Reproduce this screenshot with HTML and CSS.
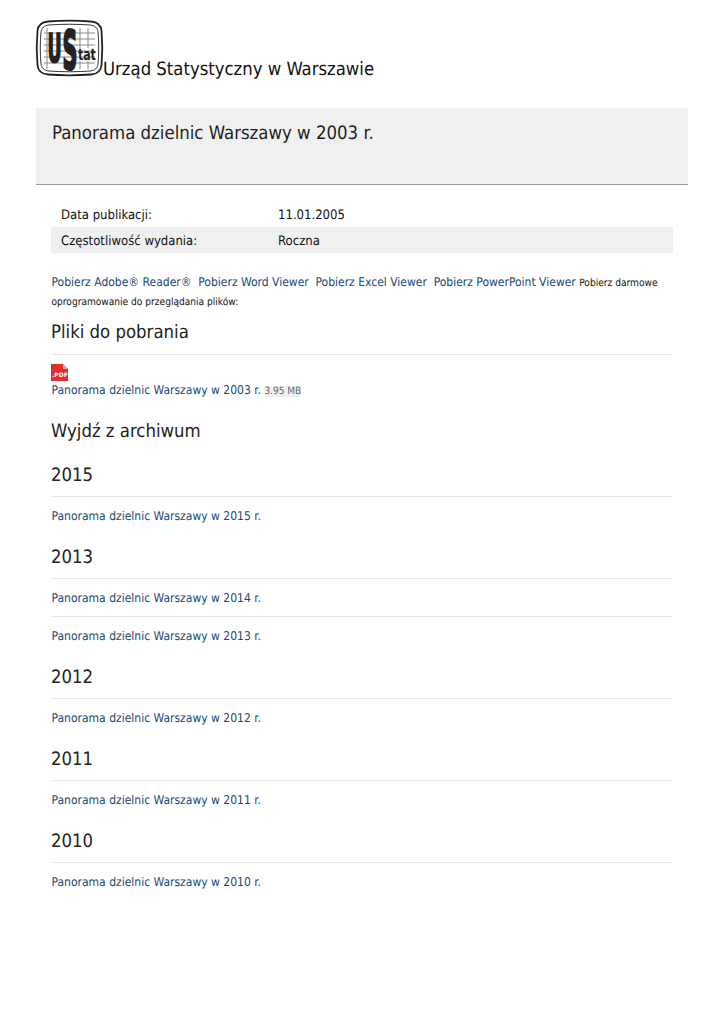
FILE: index.html
```html
<!DOCTYPE html>
<html lang="pl">
  <head>
    <meta charset="UTF-8" />
    <meta name="viewport" content="width=device-width, initial-scale=1.0" />
    <title>Panorama dzielnic Warszawy w 2003 r.</title>
    <link rel="stylesheet" href="styles.css">
  </head>

  <body>
    <header class="siteHeader">
      <svg class="logo" width="67" height="56" viewBox="0 0 67 56">
        <path d="M12 1.500C25 .5 42 .5 55 1.500 62 2 65 5 65.500 11 66.500 22 66.500 34 65.500 45 65 51 62 54 55 54.500 42 55.500 25 55.500 12 54.500 5 54 2 51 1.500 45 .5 34 .5 22 1.500 11 2 5 5 2 12 1.500Z" fill="#fff" stroke="#222" stroke-width="1.800" />
        <path d="M13 5C25 4 42 4 54 5 59 5.500 61.500 8 62 12 63 22 63 34 62 44 61.500 48 59 50.500 54 51 42 52 25 52 13 51 8 50.500 5.500 48 5 44 4 34 4 22 5 12 5.500 8 8 5.500 13 5Z" fill="#fff" stroke="#333" stroke-width="1" />
        <g stroke="#888" stroke-width="1" fill="none">
          <path d="M8 13H59M8 19H59M8 25H59M8 31H59M8 37H59M8 43H59" />
          <path d="M11 8V49M44 8V28M52 8V28M44 41V49M52 41V49" />
        </g>
        <text class="logoU" transform="translate(11.500 42) scale(.58 1.320)">U</text>
        <text class="logoS" transform="translate(26.500 49) scale(.69 1.780)">S</text>
        <text class="logoTat" transform="translate(42 40) scale(.73 1.080)">tat</text>
      </svg>
      <span class="siteName">Urząd Statystyczny w Warszawie</span>
    </header>

    <div class="titleBand">
      <h1 class="pageTitle">Panorama dzielnic Warszawy w 2003 r.</h1>
    </div>

    <main class="content">
      <div class="metaRow">
        <span class="metaLabel">Data publikacji:</span>
        <span>11.01.2005</span>
      </div>
      <div class="metaRow metaRowAlt">
        <span class="metaLabel">Częstotliwość wydania:</span>
        <span>Roczna</span>
      </div>

      <p class="viewers">
        <a href="#">Pobierz Adobe® Reader®</a>
        <a href="#">Pobierz Word Viewer</a>
        <a href="#">Pobierz Excel Viewer</a>
        <a href="#">Pobierz PowerPoint Viewer</a>
        <small>Pobierz darmowe</small>
        <small>oprogramowanie do przeglądania plików:</small>
      </p>

      <h2 class="sectionTitle">Pliki do pobrania</h2>
      <div class="fileRow">
        <svg class="pdfIcon" width="17" height="17" viewBox="0 0 17 17">
          <path d="M0 0H12L17 5V17H0z" fill="#e02f2f" />
          <path d="M12 0L17 5H12z" fill="#f29a9a" />
          <text x="1" y="12.500" class="pdfLabel">.PDF</text>
        </svg>
        <div>
          <a href="#">Panorama dzielnic Warszawy w 2003 r.</a>
          <span class="fileSize">3.95 MB</span>
        </div>
      </div>

      <h2 class="plainTitle">Wyjdź z archiwum</h2>

      <h2 class="sectionTitle year">2015</h2>
      <div class="linkRow"><a href="#">Panorama dzielnic Warszawy w 2015 r.</a></div>

      <h2 class="sectionTitle year">2013</h2>
      <div class="linkRow"><a href="#">Panorama dzielnic Warszawy w 2014 r.</a></div>
      <div class="linkRow linkRowNext"><a href="#">Panorama dzielnic Warszawy w 2013 r.</a></div>

      <h2 class="sectionTitle year">2012</h2>
      <div class="linkRow"><a href="#">Panorama dzielnic Warszawy w 2012 r.</a></div>

      <h2 class="sectionTitle year">2011</h2>
      <div class="linkRow"><a href="#">Panorama dzielnic Warszawy w 2011 r.</a></div>

      <h2 class="sectionTitle year">2010</h2>
      <div class="linkRow"><a href="#">Panorama dzielnic Warszawy w 2010 r.</a></div>
    </main>
  </body>
</html>
```

FILE: styles.css
```css
body {
  margin: 0;
  padding: 20px 37px 0 36px;
  font-family: "DejaVu Sans Condensed", "DejaVu Sans", sans-serif;
  font-stretch: condensed;
  font-size: 12px;
  color: #111;
  background: #fff;
  text-rendering: geometricPrecision;
}

a {
  color: #174a73;
  text-decoration: none;
}

.siteHeader {
  display: flex;
  align-items: flex-end;
  height: 60px;
}

.logo {
  flex: none;
  margin-bottom: 4px;
  overflow: visible;
}

.logoU,
.logoS,
.logoTat {
  font-family: "DejaVu Sans", sans-serif;
  font-stretch: normal;
  font-weight: bold;
  fill: #222;
}

.logoU,
.logoS {
  font-size: 30px;
  stroke: #222;
  stroke-width: 1.500px;
}

.logoTat {
  font-size: 15px;
}

.siteName {
  font-size: 18.350px;
  line-height: 24px;
  margin-bottom: -2px;
}

.titleBand {
  height: 61px;
  margin-top: 28px;
  padding: 15px 16px 0;
  background: #f0f0f0;
  border-bottom: 1px solid #999;
}

.pageTitle {
  margin: 0;
  font-size: 18.450px;
  font-weight: normal;
  line-height: 22px;
  color: #222;
}

.content {
  padding: 0 15px;
}

.metaRow {
  display: flex;
  height: 23px;
  padding-top: 3px;
  align-items: center;
  padding-left: 10px;
  font-size: 13px;
}

.metaRow:first-child {
  margin-top: 16px;
}

.metaRowAlt {
  background: #f0f0f0;
}

.metaLabel {
  width: 217px;
}

.viewers {
  margin: 20px 0 0;
  padding-left: 0.500px;
  line-height: 19px;
}

.viewers a {
  margin-right: 3.300px;
}

.viewers a:last-of-type {
  margin-right: 0;
}

.viewers small {
  font-size: 10.100px;
  line-height: 1;
}

.sectionTitle {
  margin: 0;
  padding-bottom: 8px;
  font-size: 18.400px;
  font-weight: normal;
  line-height: 24px;
  color: #222;
  border-bottom: 1px solid #e6e6e6;
}

.viewers + .sectionTitle {
  margin-top: 10px;
  padding-bottom: 9px;
}

.fileRow {
  padding-top: 9px;
}

.pdfIcon {
  display: block;
}

.pdfLabel {
  font-family: "DejaVu Sans", sans-serif;
  font-stretch: normal;
  font-size: 6px;
  font-weight: bold;
  fill: #fff;
}

.fileRow div {
  padding-left: 0.500px;
  line-height: 18px;
}

.fileSize {
  font-size: 10px;
  color: #666;
  background: #f0f0f0;
}

.plainTitle {
  margin: 19px 0 20px;
  font-size: 18.400px;
  font-weight: normal;
  line-height: 24px;
  color: #222;
}

.year {
  margin-top: 12px;
}

.plainTitle + .year {
  margin-top: 0;
}

.linkRow {
  height: 37px;
  padding: 12px 0 0 0.500px;
  box-sizing: border-box;
  line-height: 15px;
}

.linkRowNext {
  height: 38px;
  border-top: 1px solid #e6e6e6;
}
```
